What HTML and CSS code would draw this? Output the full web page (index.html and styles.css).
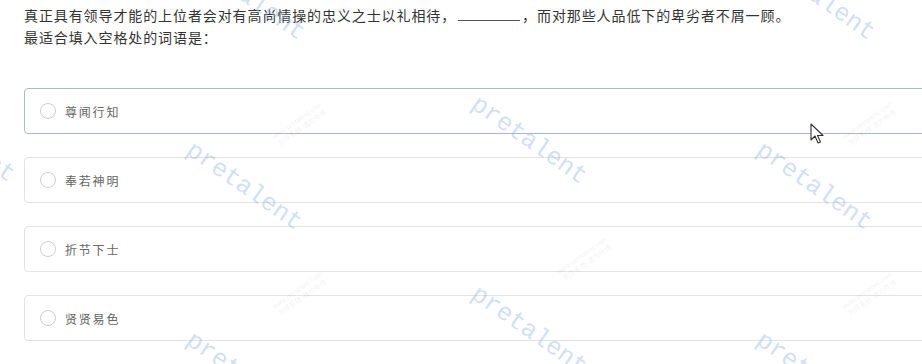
FILE: index.html
```html
<!DOCTYPE html>
<html lang="zh-CN">
<head>
    <meta charset="UTF-8">
    <title>题目</title>
    <link rel="stylesheet" href="styles.css">
</head>
<body>
    <div class="question-container">
        <!-- 题干 -->
        <div class="stem">
            <p>真正具有领导才能的上位者会对有高尚情操的忠义之士以礼相待，<span class="blank"></span>，而对那些人品低下的卑劣者不屑一顾。</p>
            <p>最适合填入空格处的词语是：</p>
        </div>
        <!-- 选项 -->
        <div class="options">
            <label class="option hover"><span class="radio"></span><span class="text">尊闻行知</span></label>
            <label class="option"><span class="radio"></span><span class="text">奉若神明</span></label>
            <label class="option"><span class="radio"></span><span class="text">折节下士</span></label>
            <label class="option"><span class="radio"></span><span class="text">贤贤易色</span></label>
        </div>
    </div>

    <!-- 水印 -->
    <div class="watermark" style="left:200px;top:-54px">pretalent</div>
    <div class="watermark" style="left:770px;top:-54px">pretalent</div>
    <div class="watermark" style="left:-90px;top:88px">pretalent</div>
    <div class="watermark" style="left:482px;top:90px">pretalent</div>
    <div class="watermark" style="left:197px;top:136px">pretalent</div>
    <div class="watermark" style="left:767px;top:136px">pretalent</div>
    <div class="watermark" style="left:482px;top:280px">pretalent</div>
    <div class="watermark" style="left:197px;top:326px">pretalent</div>
    <div class="watermark" style="left:767px;top:326px">pretalent</div>

    <div class="mark-small" style="left:270px;top:115px">www.pretalent.com<br>测评系统 请勿外传</div>
    <div class="mark-small" style="left:840px;top:115px">www.pretalent.com<br>测评系统 请勿外传</div>
    <div class="mark-small" style="left:555px;top:250px">www.pretalent.com<br>测评系统 请勿外传</div>
    <div class="mark-small" style="left:270px;top:285px">www.pretalent.com<br>测评系统 请勿外传</div>
    <div class="mark-small" style="left:840px;top:285px">www.pretalent.com<br>测评系统 请勿外传</div>

    <svg class="cursor" width="14" height="22" viewBox="0 0 14 22">
        <path d="M1 1 L1 17 L5 13 L8 20 L10.5 19 L7.5 12.5 L13 12.5 Z" fill="#fff" stroke="#333" stroke-width="1.1" stroke-linejoin="round"/>
    </svg>
</body>
</html>
```

FILE: styles.css
```css
body {
    margin: 0; /* 移除默认外边距 */
    background-color: white;
    font-family: "Microsoft YaHei", "Noto Sans CJK SC", sans-serif;
    overflow: hidden;
    position: relative;
    height: 364px;
}
.question-container {
    padding: 4px 0 0 24px;
    width: 960px;
}
.stem p {
    margin: 0;
    font-size: 14px;
    line-height: 22px;
    letter-spacing: 0.9px;
    color: #333;
}
.stem .blank {
    display: inline-block;
    width: 62px;
    height: 13px;
    border-bottom: 1px solid #555;
    margin: 0 2px;
    vertical-align: baseline;
}
.options {
    display: flex;
    flex-direction: column;
    gap: 23px;
    margin-top: 40px;
}
.option {
    display: flex;
    align-items: center;
    height: 44px;
    padding-left: 15px;
    border: 1px solid #e3e3e3;
    border-radius: 4px;
    background-color: white;
    cursor: pointer;
}
.option.hover {
    border-color: #a9b7d9; /* 悬停时边框 */
}
.option .radio {
    width: 14px;
    height: 14px;
    border: 1px solid #cfcfcf;
    border-radius: 50%;
    margin-right: 9px;
}
.option .text {
    font-size: 12px;
    letter-spacing: 1.8px;
    color: #666;
}
.watermark {
    position: absolute;
    font-family: "Liberation Mono", monospace;
    font-size: 25px;
    color: rgba(150, 185, 235, 0.45);
    transform: rotate(35deg);
    transform-origin: left top;
    pointer-events: none;
    white-space: nowrap;
}
.mark-small {
    position: absolute;
    font-family: "Liberation Sans", "Noto Sans CJK SC", sans-serif;
    font-size: 7px;
    line-height: 9px;
    color: rgba(120, 120, 120, 0.12);
    transform: rotate(-35deg);
    pointer-events: none;
    white-space: nowrap;
    text-align: center;
}
.cursor {
    position: absolute;
    left: 810px;
    top: 123px;
}
```
